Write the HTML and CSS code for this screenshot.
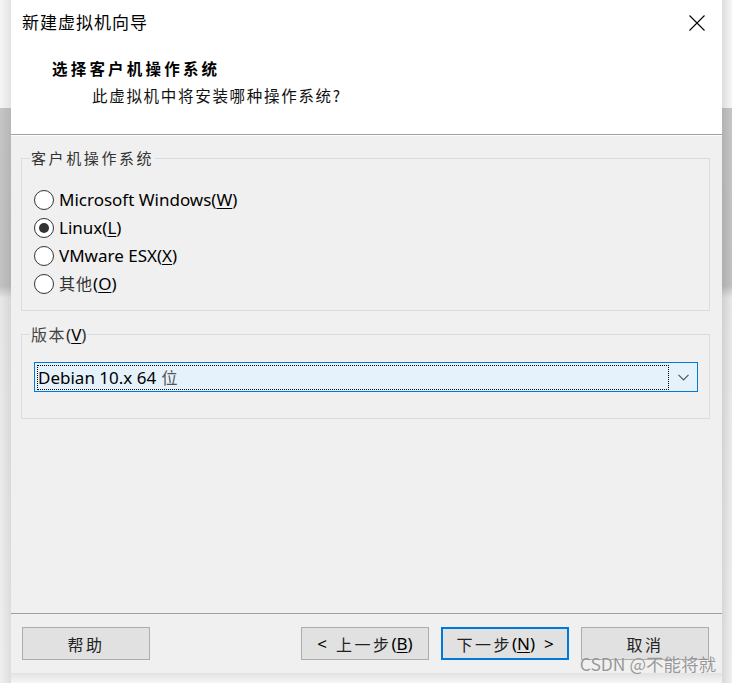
FILE: index.html
```html
<!DOCTYPE html>
<html lang="zh-CN">
<head>
<meta charset="utf-8">
<title>新建虚拟机向导</title>
<link rel="stylesheet" href="styles.css">
</head>
<body>
<div class="screen">
  <div class="side side-left"></div>
  <div class="center">
    <div class="dialog">
      <header class="head">
        <div class="titlebar">
          <span class="title">新建虚拟机向导</span>
          <span class="close"><svg width="16" height="16" viewBox="0 0 16 16"><path d="M0.5 0.5 L15.5 15.5 M15.5 0.5 L0.5 15.5" stroke="#000" stroke-width="1.1" fill="none"/></svg></span>
        </div>
        <h1 class="head-title">选择客户机操作系统</h1>
        <p class="head-sub">此虚拟机中将安装哪种操作系统?</p>
      </header>
      <main class="body">
        <fieldset class="group group-os">
          <legend class="cjk-label">客户机操作系统</legend>
          <div class="radio"><span class="circle"></span><span class="rtext">Microsoft Windows(<u>W</u>)</span></div>
          <div class="radio"><span class="circle checked"></span><span class="rtext">Linux(<u>L</u>)</span></div>
          <div class="radio"><span class="circle"></span><span class="rtext">VMware ESX(<u>X</u>)</span></div>
          <div class="radio"><span class="circle"></span><span class="rtext"><span class="cjk">其他</span>(<u>O</u>)</span></div>
        </fieldset>
        <fieldset class="group group-ver">
          <legend class="ver-label"><span class="cjk">版本</span>(<u>V</u>)</legend>
          <div class="combo">
            <div class="combo-field">Debian 10.x 64 <span class="cjk wei">位</span></div>
            <div class="combo-arrow"><svg width="11" height="7" viewBox="0 0 11 7"><path d="M0.5 0.8 L5.5 5.8 L10.5 0.8" stroke="#555" stroke-width="1.2" fill="none"/></svg></div>
          </div>
        </fieldset>
      </main>
      <footer class="foot">
        <button class="btn btn-help"><span class="cjk">帮助</span></button>
        <div class="btn-group">
          <button class="btn">&lt;  <span class="cjk">上一步</span>(<u>B</u>)</button>
          <button class="btn btn-default"><span class="cjk">下一步</span>(<u>N</u>)  &gt;</button>
          <button class="btn"><span class="cjk">取消</span></button>
        </div>
      </footer>
    </div>
    <div class="below"></div>
  </div>
  <div class="side side-right"></div>
  <div class="watermark">CSDN @不能将就</div>
</div>
</body>
</html>
```

FILE: styles.css
```css
* { box-sizing: border-box; }
html, body { margin: 0; padding: 0; }
body {
  width: 732px;
  height: 683px;
  overflow: hidden;
  font-family: "Noto Sans", "Noto Sans CJK SC", sans-serif;
  color: #000;
  background: #f3f3f3;
}
.screen {
  position: relative;
  display: flex;
  height: 683px;
}
.side { flex: none; height: 683px; }
.side-left {
  width: 11px;
  background:
    linear-gradient(to right, rgba(0,0,0,0) 0, rgba(0,0,0,0.08) 100%),
    linear-gradient(to bottom, #f6f6f6 0, #f6f6f6 108px, #c6c6c6 108px, #c2c2c2 286px, #e8e8e8 298px, #f0f0f0 100%);
}
.side-right {
  width: 10px;
  background:
    linear-gradient(to left, rgba(0,0,0,0) 0, rgba(0,0,0,0.1) 100%),
    linear-gradient(to bottom, #f6f6f6 0, #f6f6f6 108px, #c6c6c6 108px, #c2c2c2 286px, #e8e8e8 298px, #f0f0f0 100%);
}
.center {
  width: 711px;
  flex: none;
  display: flex;
  flex-direction: column;
}
.dialog {
  height: 673px;
  background: #f0f0f0;
  display: flex;
  flex-direction: column;
}
.below {
  flex: 1;
  background: linear-gradient(to bottom, #e2e2e2, #f6f6f6);
}

/* header */
.head {
  height: 135px;
  background: #fff;
  border-bottom: 1px solid #a0a0a0;
  box-shadow: 0 1px 0 #fff;
  flex: none;
}
.titlebar {
  height: 44px;
  display: flex;
  align-items: center;
  justify-content: space-between;
  padding: 0 17px 0 11px;
}
.title {
  font-family: "Noto Sans CJK SC", sans-serif;
  font-size: 17px;
  letter-spacing: 1px;
  line-height: 22px;
}
.close { display: flex; width: 16px; height: 16px; margin-top: 1px; }
.head-title {
  margin: 12px 0 0 41px;
  font-family: "Noto Sans CJK SC", sans-serif;
  font-weight: 700;
  font-size: 15.5px;
  letter-spacing: 3.2px;
  line-height: 24px;
}
.head-sub {
  margin: 4px 0 0 81px;
  font-family: "Noto Sans CJK SC", sans-serif;
  font-size: 15.5px;
  letter-spacing: 1.7px;
  line-height: 22px;
  color: #111;
}

/* body */
.body {
  flex: 1;
  display: flex;
  flex-direction: column;
}
.group {
  margin: 13px 12px 0 10px;
  border: 1px solid #dcdcdc;
  padding: 0 11px 0 12px;
  min-width: 0;
}
.group legend {
  margin-left: -4px;
  padding: 0 1px;
  line-height: 20px;
  font-size: 17px;
  color: #333;
}
.cjk-label {
  font-family: "Noto Sans CJK SC", sans-serif;
  font-size: 15px !important;
  letter-spacing: 2.6px;
}
.cjk { font-family: "Noto Sans CJK SC", sans-serif; }
.group-os { padding-top: 18px; padding-bottom: 13px; }
.group-ver { padding-top: 17px; padding-bottom: 26px; }
.ver-label .cjk { font-size: 16px; letter-spacing: 1.5px; color: #444; }
.ver-label u { color: #000; }

.radio {
  height: 28px;
  display: flex;
  align-items: center;
  gap: 5px;
}
.radio:last-child { height: 27px; }
.circle {
  width: 20px;
  height: 20px;
  flex: none;
  border: 1px solid #333;
  border-radius: 50%;
  background: #fff;
  display: flex;
  align-items: center;
  justify-content: center;
}
.circle.checked::after {
  content: "";
  width: 10px;
  height: 10px;
  border-radius: 50%;
  background: #333;
}
.rtext {
  font-size: 17px;
  line-height: 22px;
  color: #000;
}
.rtext .cjk { font-size: 16px; color: #333; letter-spacing: 1px; }
u { text-underline-offset: 2px; }

.combo {
  height: 30px;
  border: 1px solid #0078d7;
  background: #e5f1fb;
  display: flex;
}
.combo-field {
  flex: 1;
  margin: 2px 0 1px 2px;
  border: 1px dotted #000;
  font-size: 17px;
  line-height: 22px;
  padding-left: 0;
  white-space: nowrap;
}
.wei { font-size: 16px; color: #555; margin-left: 1px; }
.combo-arrow {
  width: 28px;
  flex: none;
  display: flex;
  align-items: center;
  justify-content: center;
  padding-top: 1px;
}

/* footer */
.foot {
  flex: none;
  height: 60px;
  border-top: 1px solid #a0a0a0;
  padding: 13px 13px 13px 11px;
  display: flex;
  justify-content: space-between;
  align-items: flex-start;
}
.btn-group { display: flex; gap: 12px; }
.btn {
  width: 128px;
  height: 33px;
  border: 1px solid #adadad;
  background: #e1e1e1;
  font-family: "Noto Sans", "Noto Sans CJK SC", sans-serif;
  font-size: 17px;
  color: #000;
  padding: 0;
  display: flex;
  align-items: center;
  justify-content: center;
  white-space: pre;
}
.btn .cjk { font-size: 16px; letter-spacing: 2.5px; color: #222; }
.btn-default { border: 2px solid #0078d7; }

.watermark {
  position: absolute;
  right: 16px;
  bottom: 8px;
  font-family: "Noto Sans CJK SC", sans-serif;
  font-size: 17.5px;
  line-height: 22px;
  color: rgba(110, 110, 110, 0.7);
  text-shadow: 0 0 1px rgba(255,255,255,0.6);
}
```
